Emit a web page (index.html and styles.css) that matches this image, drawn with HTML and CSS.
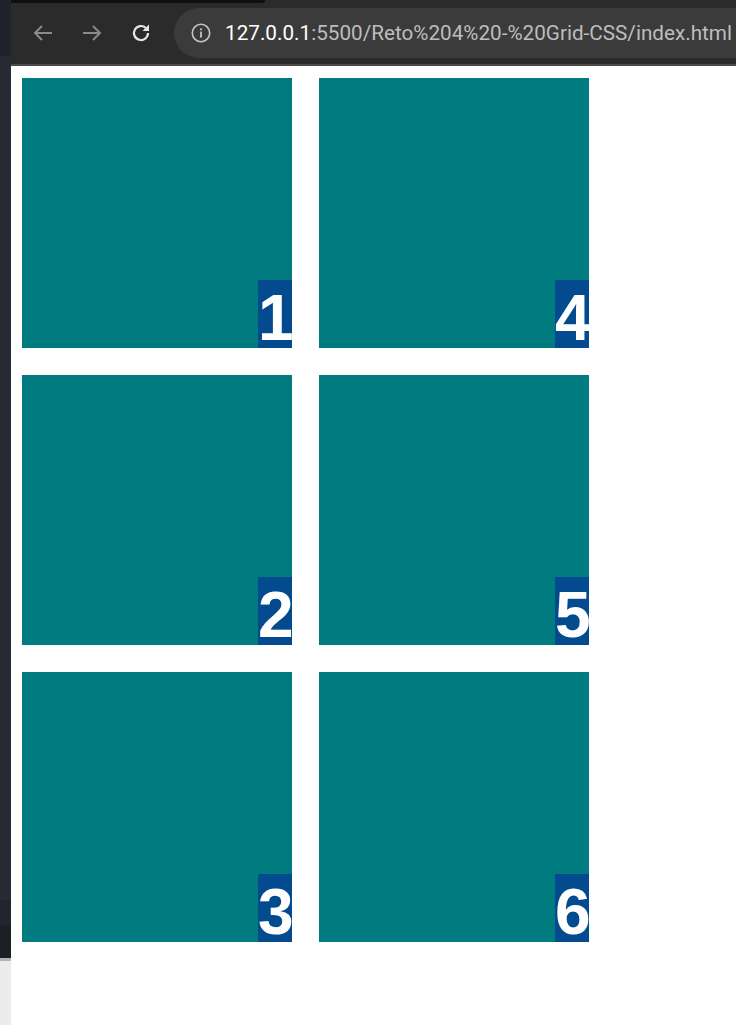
FILE: index.html
```html
<!DOCTYPE html>
<html>
<head>
  <title>Reto 4 - Grid CSS</title>
  <meta charset="UTF-8" />
  <meta name="viewport" content="width=device-width, initial-scale=1.0">
  <link rel="stylesheet" href="styles.css">
</head>
<body>
  <div class="side">
    <div class="side-top"></div>
    <div class="side-mid"></div>
    <div class="side-low"></div>
    <div class="side-dark"></div>
    <div class="side-light"></div>
  </div>

  <div class="browser">
    <div class="tabstrip">
      <div class="tab"></div>
    </div>

    <div class="toolbar">
      <svg class="nav-icon" viewBox="0 0 24 24">
        <path d="M21 12H4M11 5l-7 7 7 7" fill="none" stroke="#8a8a8a" stroke-width="2"/>
      </svg>
      <svg class="nav-icon" viewBox="0 0 24 24">
        <path d="M3 12h17M13 5l7 7-7 7" fill="none" stroke="#8a8a8a" stroke-width="2"/>
      </svg>
      <svg class="nav-icon" viewBox="0 0 24 24">
        <path d="M19 12a7 7 0 1 1-2.1-5" fill="none" stroke="#e6e6e6" stroke-width="2.2"/>
        <path d="M20 3.5v6.5h-6.5z" fill="#e6e6e6"/>
      </svg>

      <div class="omnibox">
        <svg class="info-icon" viewBox="0 0 24 24">
          <circle cx="12" cy="12" r="9.5" fill="none" stroke="#c2c2c2" stroke-width="1.8"/>
          <rect x="11" y="10.5" width="2" height="6.5" fill="#c2c2c2"/>
          <rect x="11" y="7" width="2" height="2" fill="#c2c2c2"/>
        </svg>
        <span class="url"><span class="host">127.0.0.1</span>:5500/Reto%204%20-%20Grid-CSS/index.html</span>
      </div>
    </div>

    <div class="page">
      <div class="grid">
        <div class="box"><span class="num">1</span></div>
        <div class="box"><span class="num">2</span></div>
        <div class="box"><span class="num">3</span></div>
        <div class="box"><span class="num">4</span></div>
        <div class="box"><span class="num">5</span></div>
        <div class="box"><span class="num">6</span></div>
      </div>
    </div>
  </div>
</body>
</html>
```

FILE: styles.css
```css
html, body {
  margin: 0;
  height: 100%;
}
body {
  display: flex;
  overflow: hidden;
  background: #ffffff;
  font-family: "Liberation Sans", Arial, sans-serif;
}

/* window edge on the left */
.side {
  width: 11px;
  display: flex;
  flex-direction: column;
}
.side-top {
  height: 56px;
  background: #1f2229;
}
.side-mid {
  flex: 1;
  background: #272a35;
}
.side-low {
  height: 26px;
  background: #22252e;
}
.side-dark {
  height: 32px;
  background: #1c1f24;
  border-bottom: 3px solid #b4b4b4;
}
.side-light {
  height: 64px;
  background: #ececec;
}

.browser {
  flex: 1;
  display: flex;
  flex-direction: column;
}
.tabstrip {
  height: 3px;
  background: #2b2b2b;
}
.tab {
  width: 254px;
  height: 3px;
  background: #0f0f0f;
  border-bottom-right-radius: 3px;
}
.toolbar {
  height: 59px;
  display: flex;
  align-items: center;
  padding: 0 0 2px 20px;
  background: #2b2b2b;
  border-bottom: 2px solid #4a4a4a;
}
.nav-icon {
  width: 24px;
  height: 24px;
  margin-right: 25px;
  flex-shrink: 0;
}
.nav-icon:nth-child(3) {
  margin-right: 21px;
}
.omnibox {
  flex: 1;
  height: 50px;
  display: flex;
  align-items: center;
  padding-left: 16px;
  background: #3b3b3b;
  border-radius: 25px 0 0 25px;
  white-space: nowrap;
  overflow: hidden;
}
.info-icon {
  width: 22px;
  height: 22px;
  margin-right: 13px;
  flex-shrink: 0;
}
.url {
  font-family: Roboto, "Noto Sans", sans-serif;
  font-size: 20.7px;
  color: #bdbdbd;
}
.host {
  color: #ffffff;
}

.page {
  flex: 1;
  padding: 12px 0 0 11px;
}
.grid {
  display: grid;
  grid-template-columns: repeat(2, 270px);
  grid-template-rows: repeat(3, 270px);
  grid-auto-flow: column;
  gap: 27px;
}
.box {
  background: #007b80;
  display: flex;
  justify-content: flex-end;
  align-items: flex-end;
}
.num {
  display: block;
  padding-top: 8px;
  background: #034b8e;
  color: #ffffff;
  font-weight: bold;
  font-size: 64px;
  line-height: 60px;
  letter-spacing: -1.6px;
}
```
